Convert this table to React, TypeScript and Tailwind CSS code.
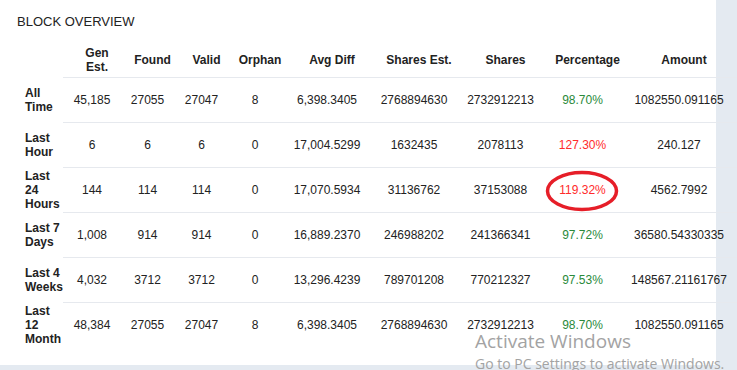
import React from 'react'

type Row = {
  label: string
  gen: string
  found: string
  valid: string
  orphan: string
  diff: string
  sharesEst: string
  shares: string
  pct: string
  bad?: boolean
  amount: string
}

const ROWS: Row[] = [
  { label: 'All Time', gen: '45,185', found: '27055', valid: '27047', orphan: '8', diff: '6,398.3405', sharesEst: '2768894630', shares: '2732912213', pct: '98.70%', amount: '1082550.091165' },
  { label: 'Last Hour', gen: '6', found: '6', valid: '6', orphan: '0', diff: '17,004.5299', sharesEst: '1632435', shares: '2078113', pct: '127.30%', bad: true, amount: '240.127' },
  { label: 'Last 24 Hours', gen: '144', found: '114', valid: '114', orphan: '0', diff: '17,070.5934', sharesEst: '31136762', shares: '37153088', pct: '119.32%', bad: true, amount: '4562.7992' },
  { label: 'Last 7 Days', gen: '1,008', found: '914', valid: '914', orphan: '0', diff: '16,889.2370', sharesEst: '246988202', shares: '241366341', pct: '97.72%', amount: '36580.54330335' },
  { label: 'Last 4 Weeks', gen: '4,032', found: '3712', valid: '3712', orphan: '0', diff: '13,296.4239', sharesEst: '789701208', shares: '770212327', pct: '97.53%', amount: '148567.21161767' },
  { label: 'Last 12 Month', gen: '48,384', found: '27055', valid: '27047', orphan: '8', diff: '6,398.3405', sharesEst: '2768894630', shares: '2732912213', pct: '98.70%', amount: '1082550.091165' },
]

const COLS = [46, 58, 53, 55, 52, 92, 82, 91, 73, 120]

function Head({ children }: { children: React.ReactNode }) {
  return (
    <th className="p-0 align-middle font-bold">
      <div className="flex justify-center pl-[10px] whitespace-nowrap leading-[14px]">
        <span className="text-center">{children}</span>
      </div>
    </th>
  )
}

function Cell({ children, className = '' }: { children: React.ReactNode; className?: string }) {
  return (
    <td className={`p-0 text-center align-middle whitespace-nowrap border-t border-[#e6e9ee] ${className}`}>
      {children}
    </td>
  )
}

export default function App() {
  return (
    <div className="relative w-[737px] h-[370px] overflow-hidden bg-[#e4eaf1] font-['Liberation_Sans',Arial,sans-serif] text-[#222]">
      <div className="w-[716px] h-[365px] bg-white pl-[17px] pt-[13px]">
        <div className="text-[13px] leading-[18px] uppercase">Block Overview</div>

        <table className="mt-[12px] table-fixed border-separate border-spacing-0 text-[12px]" style={{ width: 722 }}>
          <colgroup>
            {COLS.map((w, i) => (
              <col key={i} style={{ width: w }} />
            ))}
          </colgroup>
          <thead>
            <tr className="h-[34px]">
              <th className="p-0" />
              <Head>
                Gen
                <br />
                Est.
              </Head>
              <Head>Found</Head>
              <Head>Valid</Head>
              <Head>Orphan</Head>
              <Head>Avg Diff</Head>
              <Head>Shares Est.</Head>
              <Head>Shares</Head>
              <Head>Percentage</Head>
              <Head>Amount</Head>
            </tr>
          </thead>
          <tbody>
            {ROWS.map((r) => (
              <tr key={r.label} className="h-[45px]">
                <th className="pl-2 pr-0 py-0 text-left align-middle font-bold leading-[14px]">{r.label}</th>
                <Cell>{r.gen}</Cell>
                <Cell>{r.found}</Cell>
                <Cell>{r.valid}</Cell>
                <Cell>{r.orphan}</Cell>
                <Cell>{r.diff}</Cell>
                <Cell>{r.sharesEst}</Cell>
                <Cell>{r.shares}</Cell>
                <Cell className={r.bad ? 'text-[#ff2b2b]' : 'text-[#2a8a3a]'}>{r.pct}</Cell>
                <Cell>{r.amount}</Cell>
              </tr>
            ))}
          </tbody>
        </table>
      </div>

      {/* hand-drawn red ring around the 24h percentage */}
      <svg className="absolute left-[545px] top-[170px]" width="74" height="42" viewBox="0 0 74 42">
        <ellipse cx="37" cy="21" rx="34.5" ry="18.5" fill="none" stroke="#e61e28" strokeWidth="3.5" />
      </svg>

      {/* windows activation watermark */}
      <div className="absolute left-[475px] top-[328px] font-['Open_Sans','Noto_Sans',sans-serif] text-[#a3a3a3] whitespace-nowrap pointer-events-none">
        <div className="text-[19px] leading-[26px]">Activate Windows</div>
        <div className="text-[14px] leading-[20px]">Go to PC settings to activate Windows.</div>
      </div>
    </div>
  )
}
